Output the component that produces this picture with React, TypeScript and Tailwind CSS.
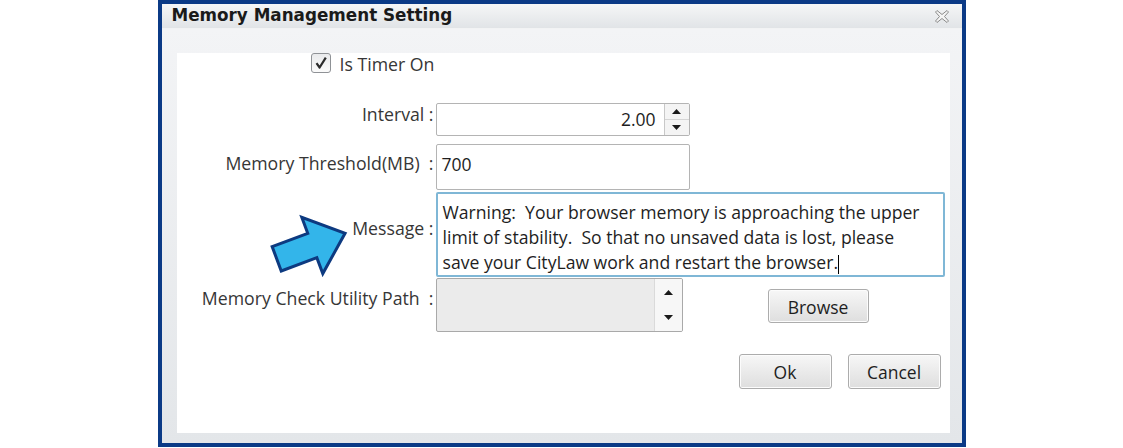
import React from "react";

const labelFont = { fontFamily: '"Open Sans", "Liberation Sans", sans-serif' };

const Checkbox = () => (
    <div className="w-[20px] h-[20px] rounded-[3px] border border-[#8f9296] bg-gradient-to-b from-[#e9eaec] to-[#fbfbfb] flex items-center justify-center">
        <svg width="14" height="14" viewBox="0 0 14 14">
            <path d="M2.5 7.2 L5.6 11.5 L11.8 1.6" fill="none" stroke="#2b2b2b" strokeWidth="2.2" strokeLinejoin="round" />
        </svg>
    </div>
);

const Arrow = ({ up }: { up?: boolean }) => (
    <svg width="9" height="5" viewBox="0 0 9 5">
        <path d={up ? "M0 5 L4.5 0 L9 5 Z" : "M0 0 L9 0 L4.5 5 Z"} fill="#1a1a1a" />
    </svg>
);

const Btn = ({ label, w }: { label: string; w: string }) => (
    <div className={`${w} h-full rounded-[3px] border border-[#acacac] bg-gradient-to-b from-[#f7f7f7] to-[#dedede] flex items-center justify-center pt-[2px] text-[17.5px] text-[#1e1e1e] shadow-[inset_0_0_0_1px_#fcfcfc]`}>
        {label}
    </div>
);

export default function App() {
    return (
        <div className="w-[1123px] h-[448px] bg-white flex justify-center" style={labelFont}>
            <div className="w-[808px] h-[447px] border-4 border-[#0b3a86] flex flex-col">
                {/* title bar */}
                <div className="h-[25px] flex items-center justify-between pl-[10px] pr-[13px] bg-gradient-to-b from-[#f5f6f7] to-[#e1e4e7] border-b border-[#f2f3f4]">
                    <span className="text-[16.8px] font-bold text-[#1a1a1a]" style={{ fontFamily: '"DejaVu Sans", Verdana, sans-serif' }}>
                        Memory Management Setting
                    </span>
                    <svg width="14" height="13" viewBox="0 0 14 13">
                        <polygon points="2,0.5 7,4.5 12,0.5 13.5,2 9.5,6.5 13.5,11 12,12.5 7,8.5 2,12.5 0.5,11 4.5,6.5 0.5,2" fill="#f4f4f4" stroke="#8a8a8a" strokeWidth="1" />
                    </svg>
                </div>

                {/* body */}
                <div className="flex-1 pt-[18px] pl-[15px] pr-[12px] pb-[16px] bg-gradient-to-b from-[#f3f4f6] to-[#e3e6e9]">
                    <div className="h-full bg-white relative text-[17.7px] text-[#363636]">
                        {/* checkbox row */}
                        <div className="mt-[6px] pl-[134px] flex items-center gap-[9px] h-[20px]">
                            <Checkbox />
                            <span className="pt-[3px]">Is Timer On</span>
                        </div>

                        {/* interval */}
                        <div className="mt-[30px] flex h-[33px]">
                            <div className="w-[257px] text-right leading-[22px] whitespace-pre">Interval :</div>
                            <div className="ml-[2px] w-[254px] flex rounded-[2px] border border-[#b4b4b4] overflow-hidden">
                                <div className="flex-1 flex items-center justify-end pr-[8px] text-[17.5px] text-[#1e1e1e]">2.00</div>
                                <div className="w-[25px] flex flex-col border-l border-[#c8c8c8] bg-[#f4f4f4]">
                                    <div className="flex-1 flex items-center justify-center border-b border-[#d5d5d5]"><Arrow up /></div>
                                    <div className="flex-1 flex items-center justify-center"><Arrow /></div>
                                </div>
                            </div>
                        </div>

                        {/* threshold */}
                        <div className="mt-[8px] flex h-[46px]">
                            <div className="w-[257px] text-right leading-[22px] pt-[8px] whitespace-pre">Memory Threshold(MB)  :</div>
                            <div className="ml-[2px] w-[254px] rounded-[2px] border border-[#b4b4b4] pl-[5px] pt-[8px] leading-[22px] text-[17.5px] text-[#1e1e1e]">700</div>
                        </div>

                        {/* message */}
                        <div className="mt-[2px] flex h-[85px]">
                            <div className="w-[257px] text-right leading-[22px] pt-[25px] whitespace-pre">Message :</div>
                            <div className="ml-[2px] w-[509px] rounded-[2px] border-2 border-[#7fb7d6] pl-[5px] pt-[6px] leading-[25px] text-[17.6px] text-[#1e1e1e] whitespace-nowrap">
                                Warning:&nbsp; Your browser memory is approaching the upper<br />
                                limit of stability.&nbsp; So that no unsaved data is lost, please<br />
                                save your CityLaw work and restart the browser.<span className="inline-block w-[1px] h-[19px] bg-black align-middle" />
                            </div>
                        </div>

                        {/* utility path */}
                        <div className="mt-[1px] flex h-[54px]">
                            <div className="w-[257px] text-right leading-[22px] pt-[9px] whitespace-pre">Memory Check Utility Path  :</div>
                            <div className="ml-[2px] w-[247px] flex rounded-[2px] border border-[#a9a9a9] bg-[#ebebeb] overflow-hidden">
                                <div className="flex-1" />
                                <div className="w-[28px] flex flex-col justify-between py-[11px] items-center bg-[#f7f7f7] border-l border-[#dadada]">
                                    <Arrow up />
                                    <Arrow />
                                </div>
                            </div>
                            <div className="ml-[85px] mt-[11px] h-[34px]">
                                <Btn label="Browse" w="w-[101px]" />
                            </div>
                        </div>

                        {/* buttons */}
                        <div className="mt-[22px] h-[35px] flex justify-end gap-[16px] pr-[9px]">
                            <Btn label="Ok" w="w-[93px]" />
                            <Btn label="Cancel" w="w-[93px]" />
                        </div>

                        {/* annotation arrow */}
                        <svg className="absolute left-[83px] top-[148px]" width="100" height="80" viewBox="0 0 100 80">
                            <g transform="translate(16.7 57.8) rotate(-20.5)">
                                <polygon points="0,-13 38,-13 38,-30 73,0 38,30 38,13 0,13" fill="#33b5ea" stroke="#0d3a80" strokeWidth="3" strokeLinejoin="miter" />
                            </g>
                        </svg>
                    </div>
                </div>
            </div>
        </div>
    );
}
